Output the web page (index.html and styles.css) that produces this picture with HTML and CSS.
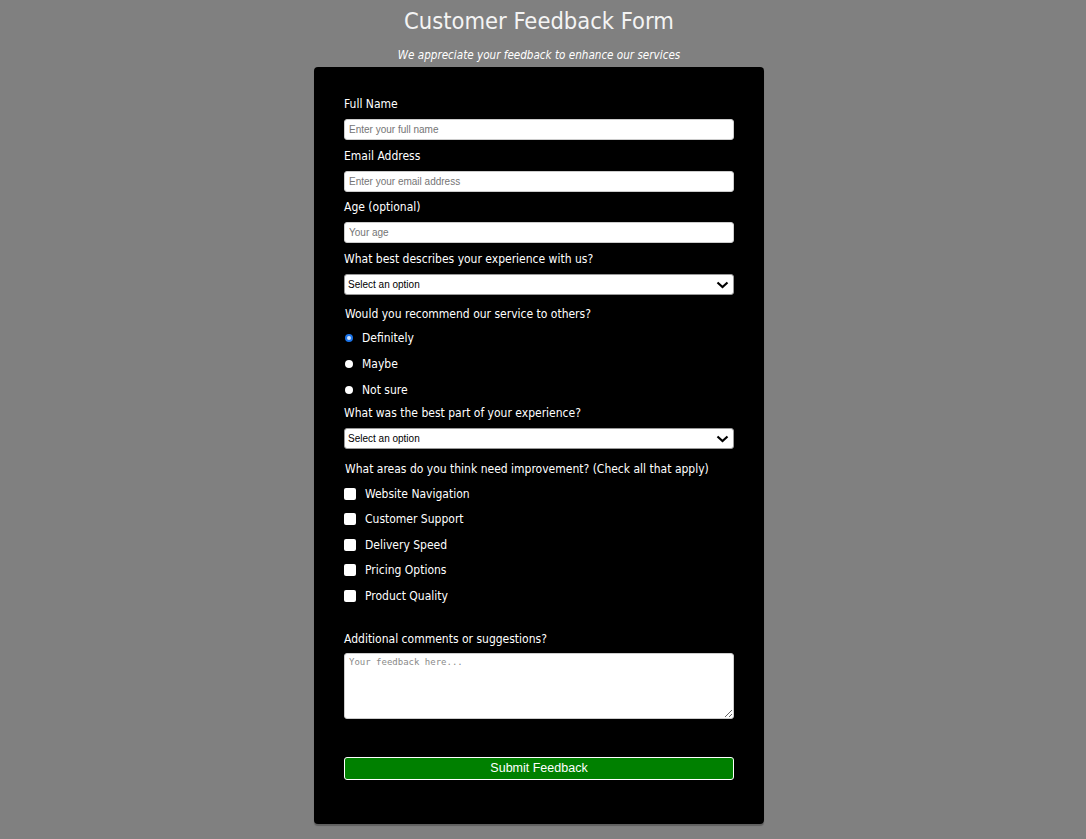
FILE: index.html
```html
<!DOCTYPE html>
<html lang="en">
<head>
  <meta charset="UTF-8" />
  <meta name="viewport" content="width=device-width, initial-scale=1.0" />
  <title>Customer Feedback Form</title>
  <link rel="stylesheet" href="styles.css">
</head>
<body>
  <h1 class="title">Customer Feedback Form</h1>
  <p class="subtitle">We appreciate your feedback to enhance our services</p>
  <div class="container">
    <form id="feedbackForm">
      <label for="name">Full Name</label>
      <input type="text" id="name" placeholder="Enter your full name" />

      <label for="email">Email Address</label>
      <input type="email" id="email" placeholder="Enter your email address" />

      <label for="age">Age (optional)</label>
      <input type="number" id="age" placeholder="Your age" />

      <label for="experience">What best describes your experience with us?</label>
      <div class="select-wrap">
        <select id="experience">
          <option>Select an option</option>
        </select>
        <svg class="chevron" width="13" height="8" viewBox="0 0 13 8"><path d="M1.5 1.5 L6.5 6 L11.5 1.5" fill="none" stroke="#000" stroke-width="2.2"/></svg>
      </div>

      <p class="question">Would you recommend our service to others?</p>
      <div class="option"><input type="radio" name="recommend" id="r1" checked /><label for="r1">Definitely</label></div>
      <div class="option"><input type="radio" name="recommend" id="r2" /><label for="r2">Maybe</label></div>
      <div class="option"><input type="radio" name="recommend" id="r3" /><label for="r3">Not sure</label></div>

      <label for="best" class="after-options">What was the best part of your experience?</label>
      <div class="select-wrap">
        <select id="best">
          <option>Select an option</option>
        </select>
        <svg class="chevron" width="13" height="8" viewBox="0 0 13 8"><path d="M1.5 1.5 L6.5 6 L11.5 1.5" fill="none" stroke="#000" stroke-width="2.2"/></svg>
      </div>

      <p class="question areas">What areas do you think need improvement? (Check all that apply)</p>
      <div class="check"><input type="checkbox" id="c1" /><label for="c1">Website Navigation</label></div>
      <div class="check"><input type="checkbox" id="c2" /><label for="c2">Customer Support</label></div>
      <div class="check"><input type="checkbox" id="c3" /><label for="c3">Delivery Speed</label></div>
      <div class="check"><input type="checkbox" id="c4" /><label for="c4">Pricing Options</label></div>
      <div class="check"><input type="checkbox" id="c5" /><label for="c5">Product Quality</label></div>

      <label for="comments" class="comments-label">Additional comments or suggestions?</label>
      <textarea id="comments" placeholder="Your feedback here..."></textarea>

      <button type="submit">Submit Feedback</button>
    </form>
  </div>
</body>
</html>
```

FILE: styles.css
```css
body {
  font-family: 'DejaVu Sans Condensed', 'DejaVu Sans', Tahoma, sans-serif;
  background-color: #808080;
  color: #fff;
  margin: 0;
  padding: 0 8px 0 0;
  min-height: 100vh;
  display: flex;
  flex-direction: column;
  align-items: center;
}
.title {
  font-size: 23.5px;
  font-weight: normal;
  color: #f4f4f4;
  margin: 6px 0 0;
  line-height: 30px;
}
.subtitle {
  font-size: 11.6px;
  font-style: italic;
  margin: 11px 0 0;
  line-height: 16px;
}
.container {
  background-color: #000;
  width: 450px;
  box-sizing: border-box;
  padding: 28px 30px 44px;
  margin-top: 4px;
  border-radius: 4px;
  box-shadow: 0 2px 1px rgba(0, 0, 0, 0.25);
}
form {
  display: flex;
  flex-direction: column;
}
label, .question {
  font-size: 12px;
  line-height: 18px;
}
form > label {
  display: block;
  margin-bottom: 6px;
}
input[type="text"], input[type="email"], input[type="number"], select, textarea {
  display: block;
  box-sizing: border-box;
  width: 100%;
  height: 21px;
  margin: 0 0 6.5px;
  padding: 0 4px;
  border: 1px solid #ccc;
  border-radius: 3px;
  background-color: #fff;
  font-family: 'Liberation Sans', Arial, sans-serif;
  font-size: 10px;
  color: #000;
  outline: none;
}
input::placeholder {
  color: #757575;
}
input[type="number"]::-webkit-inner-spin-button {
  -webkit-appearance: none;
}
.select-wrap {
  position: relative;
}
select {
  -webkit-appearance: none;
  appearance: none;
  padding-left: 3px;
  border-color: #999;
}
.chevron {
  position: absolute;
  right: 5px;
  top: 7px;
  pointer-events: none;
}
.question {
  margin: 4px 0 2px 1px;
}
.option, .check {
  display: flex;
  align-items: center;
}
.option {
  height: 26px;
}
.check {
  height: 25.5px;
}
.option input {
  -webkit-appearance: none;
  appearance: none;
  width: 8px;
  height: 8px;
  margin: 0 9px 0 1px;
  border-radius: 50%;
  background-color: #fff;
  box-sizing: border-box;
}
.option input:checked {
  border: 2px solid #1a73e8;
  background-color: #cfe3ff;
}
.check input {
  -webkit-appearance: none;
  appearance: none;
  width: 12px;
  height: 12px;
  margin: 0 9px 0 0;
  border-radius: 2px;
  background-color: #fff;
}
.after-options {
  margin-top: 1px;
}
.areas {
  margin-top: 4px;
  margin-bottom: 3.5px;
}
form > label.comments-label {
  margin-top: 21px;
  margin-bottom: 5px;
}
textarea {
  height: 66px;
  padding: 3px 4px;
  font-family: 'DejaVu Sans Mono', 'Liberation Mono', monospace;
  font-size: 9px;
  resize: vertical;
  margin-bottom: 0;
}
textarea::placeholder {
  color: #8a8a8a;
}
button {
  margin-top: 38px;
  height: 23px;
  width: 100%;
  background-color: #008000;
  color: #fff;
  border: 1px solid #fff;
  border-radius: 3px;
  font-family: 'Liberation Sans', Arial, sans-serif;
  font-size: 12.5px;
  cursor: pointer;
}
```
